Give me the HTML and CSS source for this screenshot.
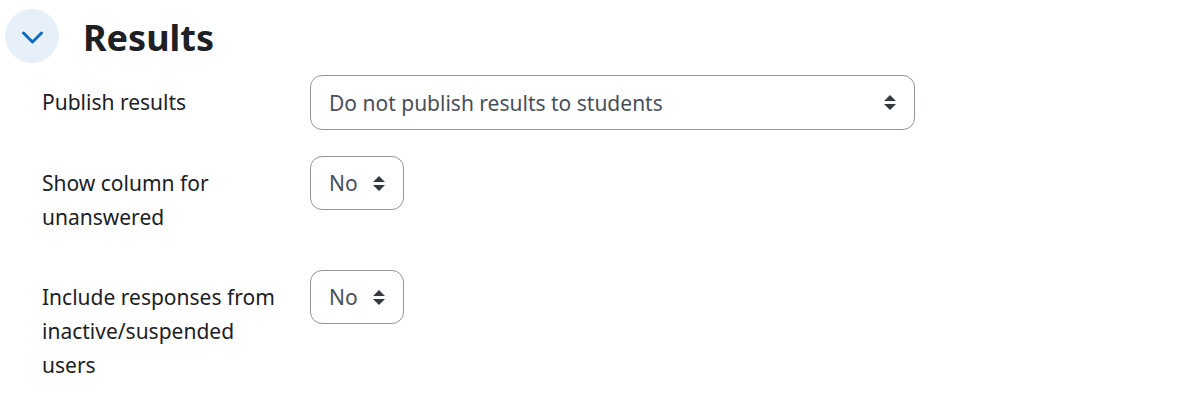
FILE: index.html
```html
<!DOCTYPE html>
<html lang="en">
<head>
<meta charset="utf-8">
<meta name="viewport" content="width=device-width, initial-scale=1">
<title>Results</title>
<link rel="stylesheet" href="styles.css">
</head>
<body>
<form class="section">
  <header class="section-header">
    <button class="toggle" type="button" aria-expanded="true" aria-controls="results-fields" aria-label="Collapse Results">
      <svg class="chevron" viewBox="0 0 24 16" aria-hidden="true"><path d="M3.5 5 12.5 14 21.5 5"/></svg>
    </button>
    <h1 class="title">Results</h1>
  </header>
  <div class="fields" id="results-fields">
    <div class="field">
      <label class="label" for="publish">Publish results</label>
      <div class="control"><select class="select select-wide" id="publish"><option>Do not publish results to students</option></select></div>
    </div>
    <div class="field">
      <label class="label" for="unanswered">Show column for unanswered</label>
      <div class="control"><select class="select" id="unanswered"><option>No</option><option>Yes</option></select></div>
    </div>
    <div class="field">
      <label class="label" for="inactive">Include responses from inactive/suspended users</label>
      <div class="control"><select class="select" id="inactive"><option>No</option><option>Yes</option></select></div>
    </div>
  </div>
</form>
</body>
</html>
```
FILE: styles.css
```css
* {
  box-sizing: border-box;
}

body {
  margin: 0;
  background: #fff;
  color: #1d2125;
  font-family: "Segoe UI", "Noto Sans", sans-serif;
  font-size: 21px;
  line-height: 34px;
}

.section {
  padding: 9px 5px;
}

.section-header {
  display: flex;
  align-items: center;
  gap: 24px;
  margin-bottom: 12px;
}

.toggle {
  display: flex;
  align-items: center;
  justify-content: center;
  width: 54px;
  height: 54px;
  padding: 0;
  border: 0;
  border-radius: 50%;
  background: #e7f0f9;
}

.chevron {
  width: 24px;
  height: 16px;
  fill: none;
  stroke: #0f6cbf;
  stroke-width: 3;
  stroke-linecap: round;
  stroke-linejoin: round;
}

.title {
  margin: 0;
  padding-top: 4px;
  font-size: 36px;
  font-weight: 700;
  line-height: 50px;
}

.fields {
  display: flex;
  flex-direction: column;
  gap: 26px;
  padding-left: 37px;
}

.field {
  display: grid;
  grid-template-columns: 240px minmax(0, 605px);
  column-gap: 28px;
  align-items: start;
}

.label {
  padding: 10px 0;
}

.select {
  appearance: none;
  display: block;
  height: 54px;
  padding: 0 41px 0 18px;
  border: 1px solid #8f959e;
  border-radius: 12px;
  background: #fff url("data:image/svg+xml,%3Csvg xmlns='http://www.w3.org/2000/svg' viewBox='0 0 4 5'%3E%3Cpath fill='%23343a40' d='M2 0L0 2h4zm0 5L0 3h4z'/%3E%3C/svg%3E") no-repeat right 18px center / 12px 15px;
  color: #495057;
  font: inherit;
}

.select-wide {
  width: 100%;
  height: 55px;
}
```
